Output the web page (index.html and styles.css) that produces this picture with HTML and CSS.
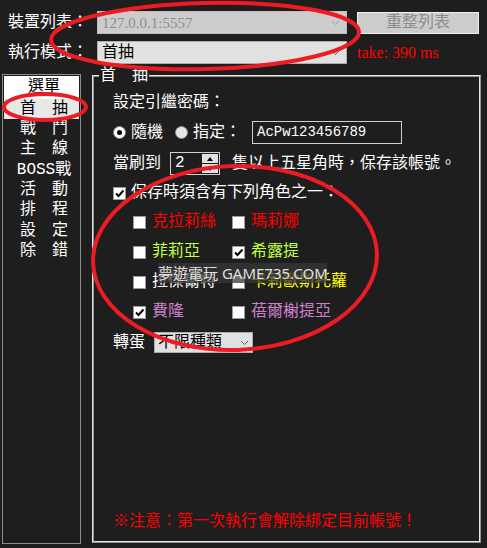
FILE: index.html
```html
<!DOCTYPE html>
<html lang="zh-Hant">
<head>
    <meta charset="UTF-8">
    <meta name="viewport" content="width=device-width, initial-scale=1.0">
    <title>首抽設定</title>
    <link rel="stylesheet" href="styles.css">
</head>
<body>
<div class="app">
    <div class="topbar">
        <div class="row">
            <span class="row-label">裝置列表：</span>
            <div class="combo disabled">
                <span>127.0.0.1:5557</span>
                <svg class="chevron" width="9" height="6" viewBox="0 0 9 6"><path d="M1 1 L4.5 4.5 L8 1"/></svg>
            </div>
            <button class="btn" disabled>重整列表</button>
        </div>
        <div class="row">
            <span class="row-label">執行模式：</span>
            <div class="combo">
                <span>首抽</span>
                <svg class="chevron" width="9" height="6" viewBox="0 0 9 6"><path d="M1 1 L4.5 4.5 L8 1"/></svg>
            </div>
            <span class="timing">take: 390 ms</span>
        </div>
    </div>

    <div class="main">
        <ul class="menu">
            <li class="menu-head">選單</li>
            <li class="active">首　抽</li>
            <li>戰　鬥</li>
            <li>主　線</li>
            <li>BOSS戰</li>
            <li>活　動</li>
            <li>排　程</li>
            <li>設　定</li>
            <li>除　錯</li>
        </ul>

        <fieldset class="group">
            <legend>首　抽</legend>
            <div class="group-body">
                <div class="line">設定引繼密碼：</div>

                <div class="line tall">
                    <span class="radio checked"></span>
                    <span class="opt">隨機</span>
                    <span class="radio second"></span>
                    <span class="opt">指定：</span>
                    <span class="textbox">AcPw123456789</span>
                </div>

                <div class="line tall">
                    <span>當刷到</span>
                    <div class="spin">
                        <span class="spin-value">2</span>
                        <div class="spin-btns">
                            <span class="spin-up"></span>
                            <span class="spin-down"></span>
                        </div>
                    </div>
                    <span class="after-spin">隻以上五星角時，保存該帳號。</span>
                </div>

                <div class="line check-row">
                    <span class="checkbox checked"><svg width="11" height="11" viewBox="0 0 11 11"><path d="M2 5.5 L4.5 8 L9.5 2.5"/></svg></span>
                    <span class="opt">保存時須含有下列角色之一：</span>
                </div>

                <div class="roster">
                    <div class="pick"><span class="checkbox"></span><span class="red">克拉莉絲</span></div>
                    <div class="pick"><span class="checkbox"></span><span class="red">瑪莉娜</span></div>
                    <div class="pick"><span class="checkbox"></span><span class="lime">菲莉亞</span></div>
                    <div class="pick"><span class="checkbox checked"><svg width="11" height="11" viewBox="0 0 11 11"><path d="M2 5.5 L4.5 8 L9.5 2.5"/></svg></span><span class="lime">希露提</span></div>
                    <div class="pick"><span class="checkbox"></span><span>拉傑爾特</span></div>
                    <div class="pick"><span class="checkbox"></span><span class="yellow">卡莉歐斯托蘿</span></div>
                    <div class="pick"><span class="checkbox checked"><svg width="11" height="11" viewBox="0 0 11 11"><path d="M2 5.5 L4.5 8 L9.5 2.5"/></svg></span><span class="violet">費隆</span></div>
                    <div class="pick"><span class="checkbox"></span><span class="violet">蓓爾榭提亞</span></div>
                </div>

                <div class="line gacha-row">
                    <span>轉蛋</span>
                    <div class="combo small">
                        <span>不限種類</span>
                        <svg class="chevron" width="9" height="6" viewBox="0 0 9 6"><path d="M1 1 L4.5 4.5 L8 1"/></svg>
                    </div>
                </div>

                <div class="line note">※注意：第一次執行會解除綁定目前帳號！</div>
            </div>
        </fieldset>
    </div>

    <div class="watermark">夢遊電玩 GAME735.COM</div>

    <svg class="marks" width="487" height="548" viewBox="0 0 487 548">
        <ellipse cx="205" cy="36" rx="154" ry="33" transform="rotate(-1.5 205 36)"/>
        <ellipse cx="45" cy="107" rx="41" ry="13"/>
        <ellipse cx="235" cy="258" rx="142" ry="92" transform="rotate(-2 235 258)"/>
    </svg>
</div>
</body>
</html>
```

FILE: styles.css
```css
* {
    box-sizing: border-box;
}

body {
    margin: 0;
    background-color: #1e1e1e;
    color: #fff;
    font-family: "Liberation Mono", "Noto Sans CJK TC", monospace;
    font-size: 16px;
    line-height: 20px;
}

.app {
    position: relative;
    width: 487px;
    height: 548px;
    overflow: hidden;
}

/* top rows */
.topbar {
    display: flex;
    flex-direction: column;
    gap: 7px;
    padding: 11px 0 0 8px;
}

.row {
    display: flex;
    align-items: center;
    height: 23px;
}

.row-label {
    width: 89px;
}

.combo {
    display: flex;
    align-items: center;
    justify-content: space-between;
    width: 250px;
    height: 23px;
    padding: 0 6px 0 4px;
    background-color: #e1e1e1;
    border: 1px solid #adadad;
    color: #000;
}

.combo.disabled {
    background-color: #cccccc;
    border-color: #bfbfbf;
    color: #8c8c8c;
    font-family: "Liberation Serif", serif;
    font-size: 15px;
}

.chevron path {
    fill: none;
    stroke: #606060;
    stroke-width: 1;
}

.combo.disabled .chevron path {
    stroke: #a0a0a0;
}

.btn {
    width: 122px;
    height: 22px;
    margin-left: 10px;
    padding: 0;
    background-color: #cccccc;
    border: 1px solid #efefef;
    color: #8c8c8c;
    font: inherit;
    line-height: 20px;
}

.timing {
    margin-left: 10px;
    color: #ff0000;
    font-family: "Liberation Serif", serif;
}

/* main area */
.main {
    display: flex;
    align-items: flex-start;
    margin-top: 1.5px;
}

.menu {
    width: 79px;
    height: 470px;
    margin: 8px 0 0 2px;
    padding: 1px 1px 0 1px;
    list-style: none;
    border: 1px solid #8c8c8c;
}

.menu li {
    height: 20.4px;
    line-height: 20.4px;
    padding-left: 5px;
    text-align: center;
    white-space: nowrap;
}

.menu li.menu-head {
    height: 23px;
    line-height: 23px;
    background-color: #fff;
    color: #000;
}

.menu li.active {
    background-color: #e8e8e8;
    color: #000;
}

.group {
    width: 389px;
    margin: 0 0 0 11px;
    padding: 0;
    min-width: 0;
    border: 2px ridge #e6e6e6;
}

.group legend {
    height: 20px;
    margin-left: 5px;
    padding: 0 1px;
    line-height: 20px;
}

.group-body {
    display: flex;
    flex-direction: column;
    height: 455.5px;
    padding: 7.5px 0 9px 19px;
}

.line {
    display: flex;
    align-items: center;
    height: 20px;
    white-space: nowrap;
}

.line.tall {
    height: 23px;
    margin-top: 8px;
}

.radio {
    position: relative;
    width: 13px;
    height: 13px;
    border-radius: 50%;
    background-color: #fff;
    border: 1px solid #8a8a8a;
}

.radio.second {
    margin-left: 12px;
    background-color: #e6e6e6;
}

.radio.checked::after {
    content: '';
    position: absolute;
    left: 3px;
    top: 3px;
    width: 5px;
    height: 5px;
    border-radius: 50%;
    background-color: #000;
}

.opt {
    margin-left: 5px;
}

.textbox {
    width: 150px;
    height: 23px;
    margin-left: 11px;
    padding-left: 4px;
    border: 1px solid #d0d0d0;
    font-family: "Liberation Mono", monospace;
    font-size: 14px;
    line-height: 21px;
}

.spin {
    display: flex;
    width: 50px;
    height: 23px;
    margin-left: 9px;
    border: 1px solid #d0d0d0;
}

.spin-value {
    flex: 1;
    padding-left: 4px;
    line-height: 21px;
}

.spin-btns {
    display: flex;
    flex-direction: column;
    width: 16px;
    margin: 1px;
    gap: 1px;
}

.spin-up,
.spin-down {
    flex: 1;
    display: flex;
    align-items: center;
    justify-content: center;
    background-color: #e1e1e1;
}

.spin-up::before {
    content: '';
    border: 3px solid transparent;
    border-bottom: 4px solid #000;
    border-top-width: 0;
}

.spin-down::before {
    content: '';
    border: 3px solid transparent;
    border-top: 4px solid #000;
    border-bottom-width: 0;
}

.after-spin {
    margin-left: 12px;
}

.check-row {
    margin-top: 8px;
}

.checkbox {
    display: flex;
    align-items: center;
    justify-content: center;
    width: 13px;
    height: 13px;
    flex-shrink: 0;
    background-color: #fff;
    border: 1px solid #9a9a9a;
}

.checkbox path {
    fill: none;
    stroke: #000;
    stroke-width: 2;
}

.roster {
    display: grid;
    grid-template-columns: 99px auto;
    grid-auto-rows: 20px;
    row-gap: 10px;
    margin-top: 9px;
    padding-left: 20px;
}

.pick {
    display: flex;
    align-items: center;
    gap: 6px;
    white-space: nowrap;
}

.red { color: #ff0000; }
.lime { color: #c0ff40; }
.yellow { color: #ffff00; }
.violet { color: #cc80cc; }

.gacha-row {
    height: 21px;
    margin-top: 10px;
}

.combo.small {
    width: 99px;
    height: 21px;
    margin-left: 9px;
    padding: 0 3px 0 3px;
}

.note {
    margin-top: auto;
    color: #ff0000;
}

/* overlays */
.watermark {
    position: absolute;
    left: 158px;
    top: 263px;
    width: 169px;
    height: 20px;
    background-color: rgba(55, 55, 55, 0.75);
    color: #e0e0e0;
    font-family: "Noto Sans", "Noto Sans CJK TC", sans-serif;
    font-size: 15px;
    line-height: 20px;
    text-align: center;
    white-space: nowrap;
}

.marks {
    position: absolute;
    left: 0;
    top: 0;
    pointer-events: none;
}

.marks ellipse {
    fill: none;
    stroke: #ec1c24;
    stroke-width: 4;
}
```
